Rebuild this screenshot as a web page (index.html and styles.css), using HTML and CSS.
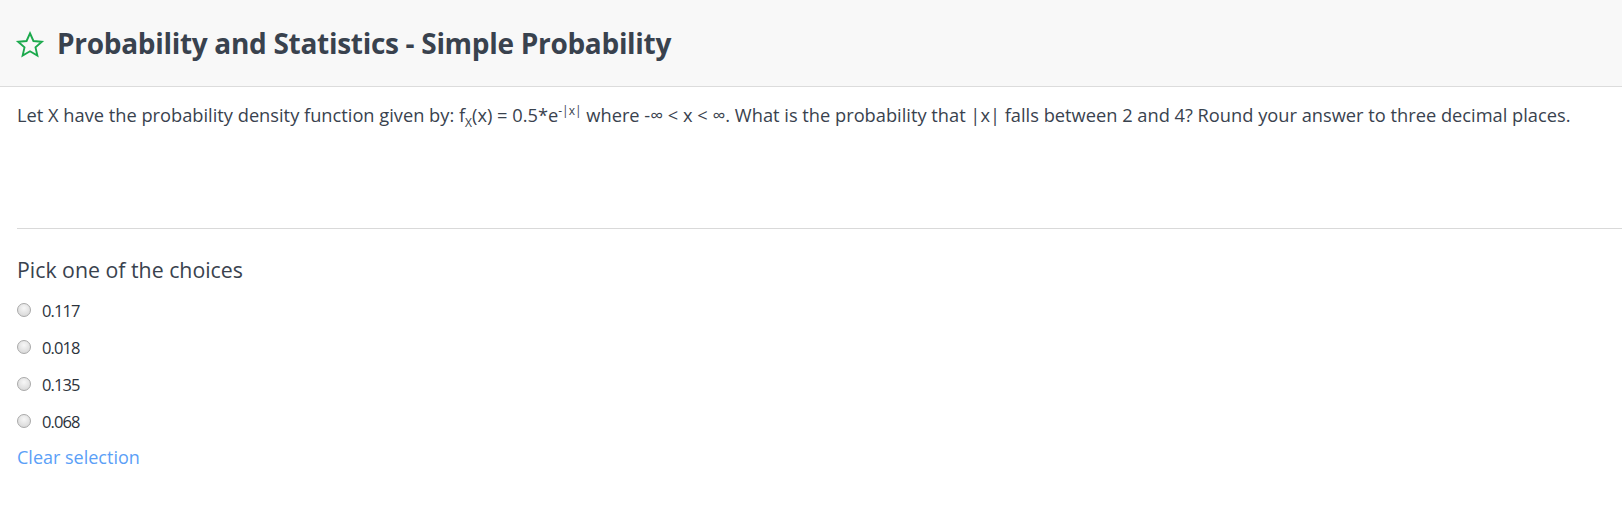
FILE: index.html
```html
<!DOCTYPE html>
<html>
<head>
<meta charset="utf-8">
<link rel="stylesheet" href="styles.css">
</head>
<body>
<header class="header">
  <svg class="star" width="30" height="30" viewBox="0 0 24 24"><path d="M12 2.6l2.75 6.2 6.75.6-5.1 4.5 1.5 6.6L12 17l-5.9 3.5 1.5-6.6-5.1-4.5 6.75-.6z" fill="none" stroke="#1ba94c" stroke-width="1.5" stroke-linejoin="miter"/></svg>
  <h1 class="title">Probability and Statistics - Simple Probability</h1>
</header>
<main class="content">
  <p class="question">Let X have the probability density function given by: f<sub>X</sub>(x) = 0.5*e<sup>-|x|</sup> where -∞ &lt; x &lt; ∞. What is the probability that |x| falls between 2 and 4? Round your answer to three decimal places.</p>
  <hr class="divider">
  <h2 class="pick">Pick one of the choices</h2>
  <ul class="choices">
    <li class="choice"><span class="radio"></span><span>0.117</span></li>
    <li class="choice"><span class="radio"></span><span>0.018</span></li>
    <li class="choice"><span class="radio"></span><span>0.135</span></li>
    <li class="choice"><span class="radio"></span><span>0.068</span></li>
  </ul>
  <a class="clear" href="#">Clear selection</a>
</main>
</body>
</html>
```
FILE: styles.css
```css
* { box-sizing: border-box; }
body {
  margin: 0;
  font-family: "Open Sans", sans-serif;
  color: #39424e;
  background: #fff;
}
.header {
  height: 87px;
  background: #f8f8f8;
  border-bottom: 1px solid #dcdcdc;
  display: flex;
  align-items: center;
  padding: 0 15px;
  gap: 12px;
}
.star { flex: none; margin-top: 4px; }
.title {
  margin: 0;
  font-size: 28px;
  font-weight: 700;
  letter-spacing: -0.3px;
}
.content { padding: 0 0 0 17px; }
.question {
  margin: 12px 0 0;
  font-size: 18.25px;
  line-height: 24px;
}
.question sub, .question sup { font-size: 12px; }
.divider {
  margin: 93px 0 0;
  border: 0;
  border-top: 1px solid #d9d9d9;
}
.pick {
  margin: 26px 0 0;
  font-size: 21.3px;
  font-weight: 400;
}
.choices { list-style: none; margin: 8px 0 0; padding: 0; }
.choice {
  display: flex;
  align-items: center;
  gap: 11px;
  height: 37px;
  font-size: 16.5px;
  letter-spacing: -0.9px;
  color: #2c333c;
}
.radio {
  width: 14px; height: 14px;
  border-radius: 50%;
  border: 1px solid #a9a9a9;
  background: radial-gradient(circle at 50% 35%, #f7f7f7, #d2d2d2);
}
.clear {
  display: block;
  color: #5b9ff7;
  text-decoration: none;
  font-size: 18px;
  margin-top: 5px;
}
```
